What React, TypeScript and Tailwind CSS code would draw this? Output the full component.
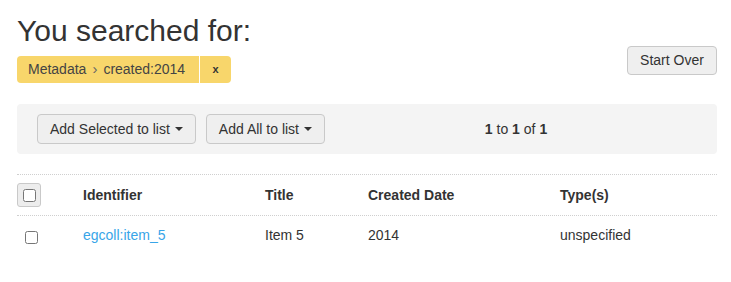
import React from 'react';

const font = { fontFamily: '"Liberation Sans", Arial, sans-serif' };

function Caret() {
  return (
    <span className="ml-[5px] inline-block h-0 w-0 border-x-[4px] border-t-[4px] border-x-transparent border-t-[#333] align-middle" />
  );
}

function ToolButton({ label }: { label: string }) {
  return (
    <button
      type="button"
      className="flex h-[30px] items-center rounded-[4px] border border-[#c9c9c9] bg-[#efefef] px-[12px] text-[14px] text-[#333]"
    >
      {label}
      <Caret />
    </button>
  );
}

const rows = [
  { id: 'egcoll:item_5', title: 'Item 5', created: '2014', types: 'unspecified' },
];

export default function App() {
  return (
    <div style={font} className="h-[282px] w-[731px] bg-white pl-[17px] pr-[14px] text-[#333]">
      <div className="flex items-start justify-between">
        <div>
          <h1 className="pt-[14px] text-[30px] leading-[33px] font-light text-[#333]">
            You searched for:
          </h1>
          <div className="mt-[9px] flex h-[27px] w-[214px] overflow-hidden rounded-[4px] bg-[#f8d66b] text-[14px] text-[#444]">
            <span className="flex flex-1 items-center pl-[11px]">
              Metadata
              <span className="mx-[6px] text-[15px] text-[#666]">›</span>
              created:2014
            </span>
            <span className="flex w-[32px] items-center justify-center border-l border-white text-[11px] font-bold text-[#333]">
              x
            </span>
          </div>
        </div>
        <button
          type="button"
          className="mt-[46px] h-[29px] w-[90px] rounded-[4px] border border-[#c9c9c9] bg-[#efefef] text-[14px] text-[#333]"
        >
          Start Over
        </button>
      </div>

      <div className="mt-[21px] flex h-[50px] items-start rounded-[4px] bg-[#f4f4f4] px-[20px] pt-[10px]">
        <div className="flex gap-[10px]">
          <ToolButton label="Add Selected to list" />
          <ToolButton label="Add All to list" />
        </div>
        <div className="ml-[10px] flex-1 pt-[5px] text-center text-[14px] leading-[20px]">
          <b>1</b> to <b>1</b> of <b>1</b>
        </div>
      </div>

      <div className="mt-[20px] text-[14px]">
        <div className="grid grid-cols-[66px_182px_103px_192px_1fr] items-center border-y border-dotted border-[#cfcfcf] py-[8px] font-bold">
          <div>
            <span className="flex h-[24px] w-[24px] items-center justify-center rounded-[3px] border border-[#c9c9c9] bg-[#ededed]">
              <input type="checkbox" className="m-0 h-[13px] w-[13px]" />
            </span>
          </div>
          <div>Identifier</div>
          <div>Title</div>
          <div>Created Date</div>
          <div>Type(s)</div>
        </div>
        {rows.map((r) => (
          <div
            key={r.id}
            className="grid grid-cols-[66px_182px_103px_192px_1fr] items-start py-[9px] leading-[20px]"
          >
            <div className="pl-[8px] pt-[6px]">
              <input type="checkbox" className="m-0 block h-[13px] w-[13px]" />
            </div>
            <a href="#" className="text-[#38a5e8]">
              {r.id}
            </a>
            <div>{r.title}</div>
            <div>{r.created}</div>
            <div>{r.types}</div>
          </div>
        ))}
      </div>
    </div>
  );
}
